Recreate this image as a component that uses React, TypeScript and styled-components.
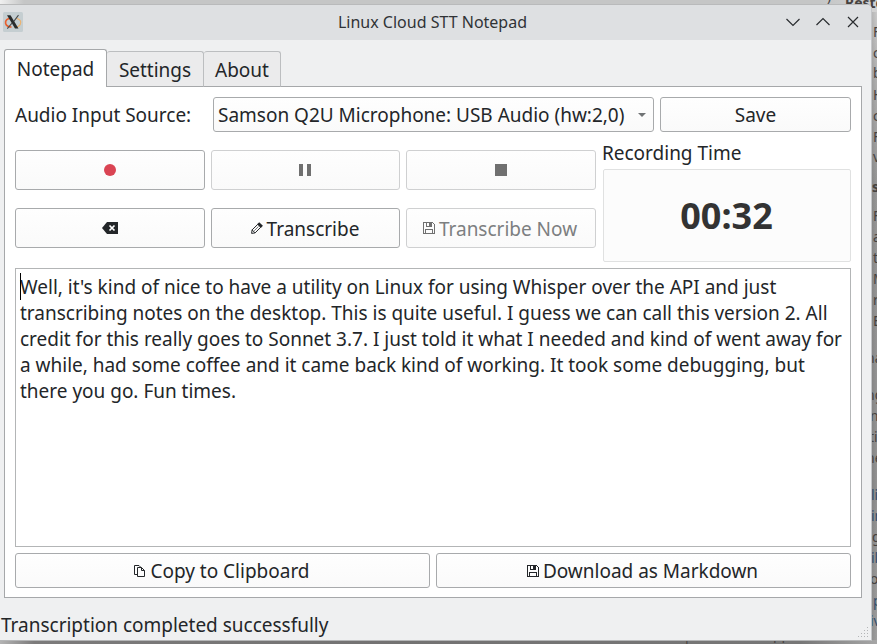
import React from "react";
import styled, { createGlobalStyle, css } from "styled-components";

const GlobalStyle = createGlobalStyle`
  * { box-sizing: border-box; }
  html, body { margin: 0; padding: 0; overflow: hidden; }
  body {
    font-family: "Noto Sans", sans-serif;
    font-size: 19px;
    line-height: 26px;
    letter-spacing: -0.01px;
    color: #232629;
  }
`;

const Desktop = styled.div`
  position: relative;
  width: 877px;
  height: 644px;
  overflow: hidden;
  padding-top: 4px;
  background: linear-gradient(90deg, #f0f0f0 0, #c5c6c6 24px, #c5c6c6 820px, #d2d2d2 100%);
`;

const ShadowRight = styled.div`
  position: absolute;
  top: 12px;
  right: 0;
  width: 6px;
  height: 632px;
  background:
    linear-gradient(90deg, rgba(0, 0, 0, 0.12), rgba(0, 0, 0, 0)),
    linear-gradient(180deg, #cbcbcb 0, #b0b0b0 70px, #989898 170px, #929292 480px, #a0a0a0 100%);
`;

const ShadowBottom = styled.div`
  position: absolute;
  left: 0;
  bottom: 0;
  width: 877px;
  height: 4px;
  background: linear-gradient(90deg, #b4b4b4 0, #7c7b7b 34px, #737272 400px, #777 800px, #a6a6a6 877px);
`;

const BackText = styled.span<{ $x: number; $y: number; $bold?: boolean; $blue?: boolean }>`
  position: absolute;
  left: ${(p) => p.$x}px;
  top: ${(p) => p.$y - 10}px;
  font-size: 14px;
  line-height: 20px;
  white-space: nowrap;
  font-weight: ${(p) => (p.$bold ? 700 : 400)};
  color: ${(p) => (p.$blue ? "#354d6b" : "#46423f")};
`;

const Window = styled.main`
  position: relative;
  width: 872px;
  height: 637px;
  background: #eff0f1;
  border-top: 1px solid #b9babb;
  border-right: 1px solid #c4c6c9;
  border-bottom: 1px solid #b5b6b7;
  border-radius: 0 5px 0 0;
  display: flex;
  flex-direction: column;
  overflow: hidden;
`;

const TitleBar = styled.header`
  flex: none;
  height: 35px;
  background: #dee0e2;
  display: grid;
  grid-template-columns: 120px 1fr 120px;
  align-items: center;
  padding: 0 6px 1px 0;
`;

const AppIcon = styled.svg`
  margin-left: 3px;
  display: block;
`;

const Title = styled.h1`
  margin: 0;
  font-size: 16px;
  font-weight: 400;
  line-height: 24px;
  letter-spacing: 0;
  text-align: center;
  color: #303336;
`;

const WindowControls = styled.div`
  display: flex;
  justify-content: flex-end;
  gap: 14px;
  padding-right: 4px;
`;

const Tabs = styled.nav`
  flex: none;
  display: flex;
  align-items: flex-end;
  height: 47px;
  padding: 9px 0 0 4px;
  margin-bottom: -1px;
  position: relative;
`;

const Tab = styled.div<{ $active?: boolean; $width: number }>`
  width: ${(p) => p.$width}px;
  text-align: center;
  border: 1px solid #bcbec0;
  border-radius: 3px 3px 0 0;
  white-space: nowrap;
  ${(p) =>
    p.$active
      ? css`
          height: 38px;
          padding-top: 6px;
          background: #fff;
          border-color: #a6a8aa;
          border-bottom: 0;
        `
      : css`
          height: 36px;
          padding-top: 5px;
          background: #ebebec;
          border-bottom-color: #a6a8aa;
          border-left: 0;
        `}
`;

const Panel = styled.section`
  flex: none;
  width: 858px;
  height: 512px;
  margin-left: 4px;
  padding: 10px 10px 9px;
  background: #fff;
  border: 1px solid #a6a8aa;
  display: flex;
  flex-direction: column;
`;

const SourceRow = styled.div`
  display: grid;
  grid-template-columns: 192px 441px 191px;
  column-gap: 6px;
  height: 35px;
  align-items: center;
`;

const SourceLabel = styled.label`
  white-space: nowrap;
`;

const raised = css`
  border: 1px solid #a8aaac;
  border-radius: 3px;
  background: linear-gradient(#fefefe, #fafafa);
`;

const Combo = styled.div`
  ${raised}
  height: 35px;
  display: flex;
  align-items: center;
  justify-content: space-between;
  padding: 0 7px 0 4px;
  white-space: nowrap;
`;

const Button = styled.button<{ $height: number; $inset?: number }>`
  ${raised}
  height: ${(p) => p.$height}px;
  padding: 0 ${(p) => p.$inset ?? 0}px 0 0;
  font: inherit;
  letter-spacing: inherit;
  color: inherit;
  display: flex;
  align-items: center;
  justify-content: center;
  gap: 4px;
  white-space: nowrap;
  svg { display: block; flex: none; }
  &:disabled {
    color: #7d7f81;
    border-color: #cfd0d1;
  }
`;

const LowLabel = styled.span`
  padding-top: 2px;
`;

const Controls = styled.div`
  flex: none;
  display: grid;
  grid-template-columns: 581px 248px;
  column-gap: 7px;
  height: 125px;
  margin-top: 5px;
`;

const ButtonGrid = styled.div`
  display: grid;
  grid-template-columns: 190px 189px 190px;
  column-gap: 6px;
  row-gap: 18px;
  align-content: start;
  padding-top: 13px;
`;

const TimeBox = styled.div`
  display: flex;
  flex-direction: column;
  padding-top: 3px;
`;

const TimeLabel = styled.div`
  height: 29px;
  margin-left: -1px;
`;

const TimeDisplay = styled.output`
  height: 93px;
  padding-right: 1px;
  border: 1px solid #e0e1e1;
  border-radius: 2px;
  background: #fcfcfc;
  display: flex;
  align-items: center;
  justify-content: center;
  font-size: 36px;
  font-weight: 700;
  color: #333;
`;

const Transcript = styled.article`
  position: relative;
  flex: none;
  height: 279px;
  margin-top: 6px;
  padding: 5px 4px;
  border: 1px solid #b3b5b6;
  white-space: pre;
`;

const Caret = styled.span`
  position: absolute;
  left: 4px;
  top: 4px;
  width: 1px;
  height: 27px;
  background: #000;
`;

const Line = styled.div``;

const Actions = styled.div`
  display: grid;
  grid-template-columns: 415px 415px;
  column-gap: 6px;
  margin-top: 6px;
`;

const StatusBar = styled.footer`
  flex: 1;
  display: flex;
  justify-content: space-between;
  align-items: flex-end;
  padding: 0 2px 1px 1px;
`;

const StatusText = styled.span`
  margin-bottom: 1px;
`;

const Xorg = () => (
  <AppIcon width="20" height="20" viewBox="0 0 20 20">
    <rect width="20" height="20" rx="1.5" fill="#c5ced1" />
    <path d="M8.500 6.200C4.500 6.200 2 8.500 2.600 11.200C3.200 13.600 5.500 15 8.500 15" fill="none" stroke="#e9602f" strokeWidth="1.700" />
    <path d="M13.500 6.300C17 7 18.600 9.500 17.300 12.300C16.300 14.300 14 15.300 11 15.200" fill="none" stroke="#edb26f" strokeWidth="1.300" />
    <path d="M4 3.200H7.500L15.500 16.500H12Z" fill="#292c2d" />
    <path d="M15.500 3.200L10.800 9.300M9 11.200L4.300 16.600" stroke="#4a4d4e" strokeWidth="1.100" />
  </AppIcon>
);

const ControlIcon = ({ d }: { d: string }) => (
  <svg width="16" height="16" viewBox="0 0 16 16" fill="none" stroke="#292c2f" strokeWidth="1.200">
    <path d={d} />
  </svg>
);

const FloppyIcon = ({ color = "#232629" }: { color?: string }) => (
  <svg width="12" height="12" viewBox="0 0 12 12" fill="none" stroke={color} shapeRendering="crispEdges">
    <path d="M.5 .5H9.500L11.500 2.500V11.500H.5Z" />
    <path d="M3.500 0V4.500H8.500V0M2.500 11V7.500H9.500V11" />
    <path d="M6 1h2v3h-2z" fill={color} stroke="none" />
  </svg>
);

const PencilIcon = () => (
  <svg width="12" height="12" viewBox="0 0 12 12">
    <path d="M8.200 .2L11.900 3.800L9.800 6L6.100 2.300Z" fill="#232629" />
    <path d="M6.800 2.300L1.100 7.900L.6 11.400L4.100 10.900L9.700 5.300M1.100 7.900L4.100 10.900" fill="none" stroke="#232629" />
    <path d="M3.200 8.800L7.400 4.600" fill="none" stroke="#232629" strokeWidth=".6" />
  </svg>
);

const CopyIcon = () => (
  <svg width="12" height="12" viewBox="0 0 12 12" fill="none" stroke="#232629">
    <path d="M3 9.500H.5V.5H5L7 2.500" />
    <path d="M3.500 2.500H7.500L10.500 5.500V11.500H3.500ZM7.500 2.500V5.500H10.500" />
  </svg>
);

const EraseIcon = () => (
  <svg width="16" height="12" viewBox="0 0 16 12">
    <path d="M0 6L5 0H16V12H5Z" fill="#232629" />
    <path d="M7.500 3.500L12.500 8.500M12.500 3.500L7.500 8.500" stroke="#fff" strokeWidth="1.700" />
  </svg>
);

const Grip = () => (
  <svg width="12" height="12" viewBox="0 0 12 12" fill="#b3b5b7">
    {[[10, 0], [7, 3], [10, 3], [4, 6], [7, 6], [10, 6], [1, 9], [4, 9], [7, 9], [10, 9]].map(([x, y]) => (
      <rect key={`${x}-${y}`} x={x} y={y} width="1" height="1" />
    ))}
  </svg>
);

const behind: { t: string; x: number; y: number; bold?: boolean; blue?: boolean }[] = [
  { t: ")", x: 827, y: -4 },
  { t: "Restore", x: 845, y: 3, bold: true },
  { t: "F", x: 873, y: 32 }, { t: "c", x: 873, y: 53 }, { t: "b", x: 873, y: 73 },
  { t: "H", x: 873, y: 95 }, { t: "c", x: 873, y: 116 }, { t: "F", x: 873, y: 137 },
  { t: "v", x: 873, y: 157 }, { t: "s", x: 872, y: 187, bold: true },
  { t: "F", x: 873, y: 216 }, { t: "a", x: 873, y: 237 }, { t: "t", x: 873, y: 258 },
  { t: "M", x: 873, y: 279 }, { t: "r", x: 873, y: 300 }, { t: "E", x: 873, y: 321 },
  { t: "na", x: 866, y: 358 }, { t: "ng", x: 866, y: 395 }, { t: "n", x: 870, y: 416 },
  { t: "ti", x: 869, y: 437 }, { t: "ne", x: 866, y: 458 }, { t: "li", x: 871, y: 495, blue: true },
  { t: "in", x: 871, y: 516, blue: true }, { t: "g", x: 872, y: 537 }, { t: "il", x: 871, y: 558, blue: true },
  { t: "o", x: 870, y: 579 }, { t: "p", x: 873, y: 601, blue: true }, { t: "iv", x: 870, y: 621, blue: true },
  { t: "|", x: 683, y: 640 }, { t: "pp", x: 773, y: 634 },
];

const transcript = [
  "Well, it's kind of nice to have a utility on Linux for using Whisper over the API and just",
  "transcribing notes on the desktop. This is quite useful. I guess we can call this version 2. All",
  "credit for this really goes to Sonnet 3.7. I just told it what I needed and kind of went away for",
  "a while, had some coffee and it came back kind of working. It took some debugging, but",
  "there you go. Fun times.",
];

export default function App() {
  return (
    <>
      <GlobalStyle />
      <Desktop>
        <ShadowRight />
        <ShadowBottom />
        {behind.map((b, i) => (
          <BackText key={i} $x={b.x} $y={b.y} $bold={b.bold} $blue={b.blue}>{b.t}</BackText>
        ))}
        <Window>
          <TitleBar>
            <Xorg />
            <Title>Linux Cloud STT Notepad</Title>
            <WindowControls>
              <ControlIcon d="M1.500 5L8 11.500L14.500 5" />
              <ControlIcon d="M1.500 11L8 4.500L14.500 11" />
              <ControlIcon d="M3 3L13 13M13 3L3 13" />
            </WindowControls>
          </TitleBar>
          <Tabs>
            <Tab $active $width={103}>Notepad</Tab>
            <Tab $width={97}>Settings</Tab>
            <Tab $width={77}>About</Tab>
          </Tabs>
          <Panel>
            <SourceRow>
              <SourceLabel>Audio Input Source:</SourceLabel>
              <Combo>
                Samson Q2U Microphone: USB Audio (hw:2,0)
                <svg width="8" height="4" viewBox="0 0 8 4"><path d="M0 0H8L4 4Z" fill="#707375" /></svg>
              </Combo>
              <Button $height={35}>Save</Button>
            </SourceRow>
            <Controls>
              <ButtonGrid>
                <Button $height={40} aria-label="Record">
                  <svg width="12" height="12"><circle cx="6" cy="6" r="6" fill="#da4453" /></svg>
                </Button>
                <Button $height={40} $inset={1} disabled aria-label="Pause">
                  <svg width="12" height="12"><path d="M0 0H4V12H0ZM8 0H12V12H8Z" fill="#707070" /></svg>
                </Button>
                <Button $height={40} disabled aria-label="Stop">
                  <svg width="12" height="12"><rect width="12" height="12" fill="#707070" /></svg>
                </Button>
                <Button $height={40} aria-label="Clear"><EraseIcon /></Button>
                <Button $height={40} $inset={1}><PencilIcon /><LowLabel>Transcribe</LowLabel></Button>
                <Button $height={40} $inset={2} disabled><FloppyIcon color="#707070" /><LowLabel>Transcribe Now</LowLabel></Button>
              </ButtonGrid>
              <TimeBox>
                <TimeLabel>Recording Time</TimeLabel>
                <TimeDisplay>00:32</TimeDisplay>
              </TimeBox>
            </Controls>
            <Transcript>
              <Caret />
              {transcript.map((l) => <Line key={l}>{l}</Line>)}
            </Transcript>
            <Actions>
              <Button $height={35} $inset={1}><CopyIcon />Copy to Clipboard</Button>
              <Button $height={35} $inset={2}><FloppyIcon />Download as Markdown</Button>
            </Actions>
          </Panel>
          <StatusBar>
            <StatusText>Transcription completed successfully</StatusText>
            <Grip />
          </StatusBar>
        </Window>
      </Desktop>
    </>
  );
}
